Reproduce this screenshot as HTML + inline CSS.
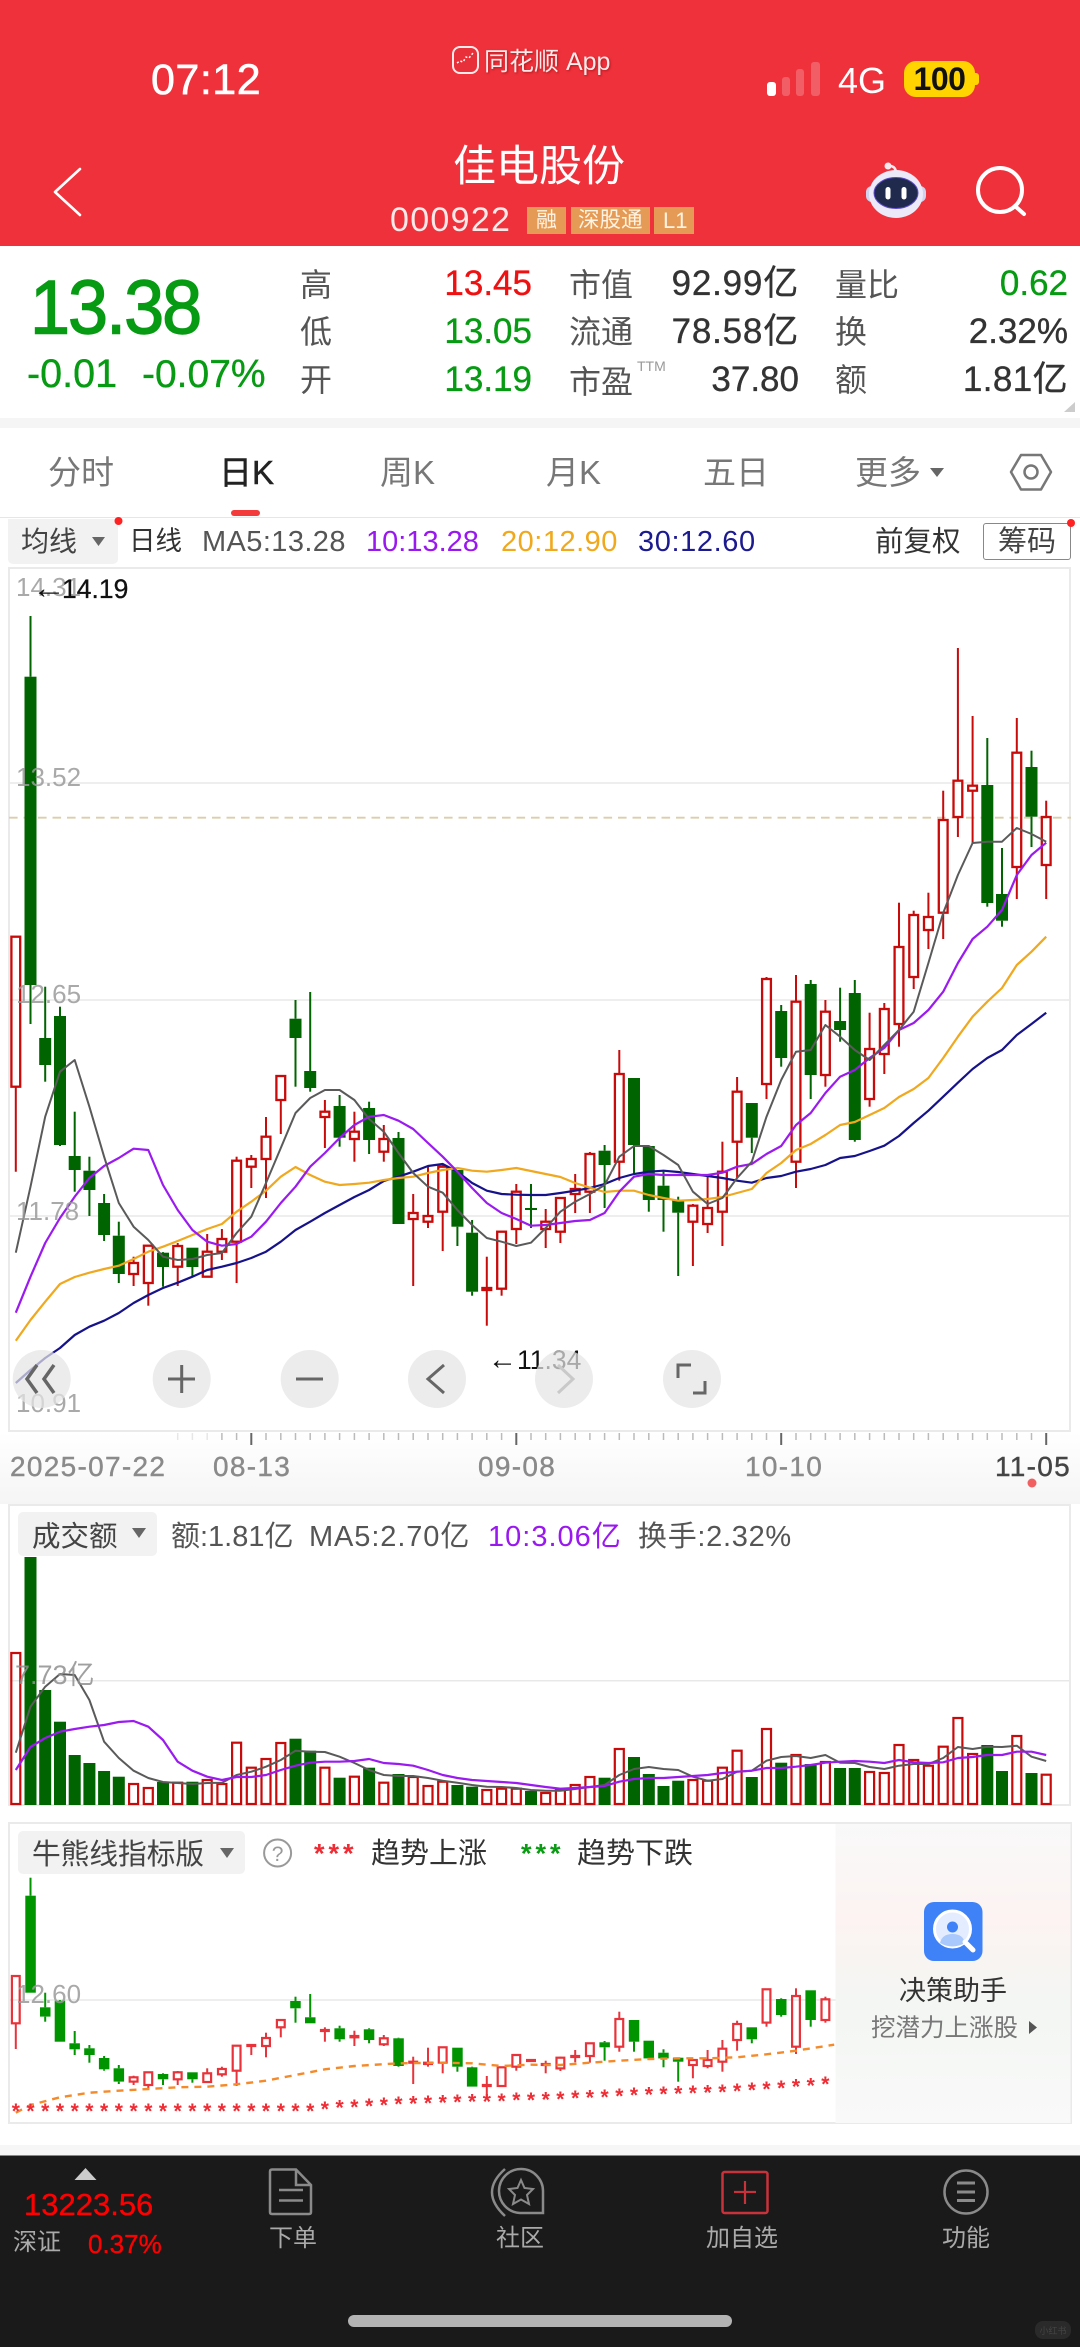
<!DOCTYPE html>
<html lang="zh"><head><meta charset="utf-8"><title>佳电股份</title>
<style>
html,body{margin:0;padding:0;background:#fff}
#p{position:relative;width:1080px;height:2347px;overflow:hidden;background:#fff;font-family:"Liberation Sans","Noto Sans CJK SC",sans-serif}
.t{position:absolute;white-space:nowrap;line-height:1}
.v{-webkit-text-stroke:.35px currentColor}
.b{position:absolute}
svg{position:absolute;left:0;top:0}
svg text{font-family:"Liberation Sans","Noto Sans CJK SC",sans-serif}
</style></head><body><div id="p">
<div class="b" style="left:0;top:0;width:1080px;height:246px;background:#ef313b"></div>
<div class="b" style="left:0;top:418px;width:1080px;height:10px;background:#f5f5f5"></div>
<div class="b" style="left:0;top:517px;width:1080px;height:1px;background:#e6e6e6"></div>
<div class="b" style="left:0;top:1432px;width:1080px;height:72px;background:linear-gradient(#fff,#f5f5f5)"></div>
<div class="b" style="left:0;top:2145px;width:1080px;height:10px;background:#f6f6f6"></div>
<div class="b" style="left:0;top:2155px;width:1080px;height:192px;background:#1a1a1a;border-top:1px solid #888;box-sizing:border-box"></div>

<span class="t" style="left:151px;top:59px;font-size:43px;color:#fff;-webkit-text-stroke:.6px #fff;letter-spacing:.5px">07:12</span>
<span class="t" style="left:484px;top:50px;font-size:25px;color:#fdeaea;text-shadow:1px 1px 2px rgba(120,0,0,.5)">同花顺 App</span>
<span class="t" style="left:838px;top:63px;font-size:36px;color:#fff">4G</span>
<div class="b" style="left:904px;top:61px;width:71px;height:36px;border-radius:12px;background:#ffd400"></div>
<div class="b" style="left:975px;top:73px;width:4px;height:12px;border-radius:0 3px 3px 0;background:#ffd400"></div>
<span class="t" style="left:904px;width:71px;text-align:center;top:63px;font-size:32px;font-weight:bold;color:#111;letter-spacing:-.5px">100</span>

<span class="t" style="left:453px;top:146px;font-size:43px;color:#fff">佳电股份</span>
<span class="t" style="left:390px;top:203px;font-size:34px;color:#fbe9e9;letter-spacing:1.3px">000922</span>
<div class="b" style="left:527px;top:207px;width:39px;height:27px;background:#e59a55"></div>
<div class="b" style="left:571px;top:207px;width:79px;height:27px;background:#e59a55"></div>
<div class="b" style="left:654px;top:207px;width:40px;height:27px;background:#e59a55"></div>
<span class="t" style="left:536px;top:210px;font-size:21px;color:#fff4e4">融</span>
<span class="t" style="left:578px;top:210px;font-size:21.5px;color:#fff4e4">深股通</span>
<span class="t" style="left:663px;top:210px;font-size:22px;color:#fff4e4">L1</span>

<span class="t" style="left:30px;top:272px;font-size:72px;color:#079a13;letter-spacing:-2px;-webkit-text-stroke:1.3px #079a13;transform-origin:0 50%;transform:scaleY(1.06)">13.38</span>
<span class="t v" style="left:27px;top:355px;font-size:39.5px;color:#079a13">-0.01</span>
<span class="t v" style="left:142px;top:355px;font-size:39px;color:#079a13">-0.07%</span>

<span class="t" style="left:300px;top:269px;font-size:32px;color:#555">高</span>
<span class="t" style="left:300px;top:316px;font-size:32px;color:#555">低</span>
<span class="t" style="left:300px;top:364px;font-size:32px;color:#555">开</span>
<span class="t v" style="right:548px;top:266px;font-size:35px;color:#ee1111">13.45</span>
<span class="t v" style="right:548px;top:314px;font-size:35px;color:#079a13">13.05</span>
<span class="t v" style="right:548px;top:362px;font-size:35px;color:#079a13">13.19</span>
<span class="t" style="left:569px;top:269px;font-size:32px;color:#555">市值</span>
<span class="t" style="left:569px;top:316px;font-size:32px;color:#555">流通</span>
<span class="t" style="left:569px;top:366px;font-size:32px;color:#555">市盈</span>
<span class="t" style="left:637px;top:359px;font-size:14px;color:#999">TTM</span>
<span class="t v" style="right:281px;top:266px;font-size:35px;color:#333;letter-spacing:.8px">92.99亿</span>
<span class="t v" style="right:281px;top:314px;font-size:35px;color:#333;letter-spacing:.8px">78.58亿</span>
<span class="t v" style="right:281px;top:362px;font-size:35px;color:#333">37.80</span>
<span class="t" style="left:835px;top:269px;font-size:32px;color:#555">量比</span>
<span class="t" style="left:835px;top:316px;font-size:32px;color:#555">换</span>
<span class="t" style="left:835px;top:364px;font-size:32px;color:#555">额</span>
<span class="t v" style="right:12px;top:266px;font-size:35px;color:#079a13">0.62</span>
<span class="t v" style="right:12px;top:314px;font-size:35px;color:#333">2.32%</span>
<span class="t v" style="right:12px;top:362px;font-size:35px;color:#333;letter-spacing:.4px">1.81亿</span>

<span class="t" style="left:48px;top:456px;font-size:33px;color:#777">分时</span>
<span class="t" style="left:219px;top:456px;font-size:33px;color:#222;-webkit-text-stroke:.5px #222">日K</span>
<span class="t" style="left:380px;top:456px;font-size:33px;color:#777">周K</span>
<span class="t" style="left:546px;top:456px;font-size:33px;color:#777">月K</span>
<span class="t" style="left:703px;top:456px;font-size:33px;color:#777">五日</span>
<span class="t" style="left:855px;top:456px;font-size:33px;color:#777">更多</span>
<div class="b" style="left:231px;top:510px;width:29px;height:6px;border-radius:3px;background:#f33b3b"></div>

<div class="b" style="left:8px;top:519px;width:110px;height:45px;background:#f2f2f2;border-radius:0 0 5px 5px"></div>
<span class="t" style="left:21px;top:528px;font-size:28px;color:#444">均线</span>
<span class="t" style="left:129px;top:528px;font-size:26.5px;color:#333">日线</span>
<span class="t" style="left:202px;top:528px;font-size:29px;color:#555;letter-spacing:.4px">MA5:13.28</span>
<span class="t" style="left:366px;top:528px;font-size:29px;color:#9a18f0">10:13.28</span>
<span class="t" style="left:501px;top:528px;font-size:29px;color:#f0a81c;letter-spacing:.5px">20:12.90</span>
<span class="t" style="left:638px;top:528px;font-size:29px;color:#1c1a8f;letter-spacing:.6px">30:12.60</span>
<span class="t" style="left:875px;top:528px;font-size:28.5px;color:#333">前复权</span>
<div class="b" style="left:983px;top:523px;width:88px;height:37px;border:1.5px solid #888;box-sizing:border-box;border-radius:3px"></div>
<span class="t" style="left:998px;top:528px;font-size:29px;color:#444">筹码</span>

<div class="b" style="left:8px;top:567px;width:1063px;height:865px;border:2px solid #eaeaea;box-sizing:border-box"></div>
<div class="b" style="left:8px;top:1504px;width:1063px;height:302px;border:2px solid #eaeaea;box-sizing:border-box"></div>
<div class="b" style="left:8px;top:1822px;width:1064px;height:302px;border:2.5px solid #eaeaea;box-sizing:border-box"></div>

<svg id="s" width="1080" height="2347" viewBox="0 0 1080 2347" xmlns="http://www.w3.org/2000/svg">
<!-- status & header icons -->
<rect x="767" y="82" width="9" height="14" rx="3" fill="#fff"/>
<rect x="782" y="77" width="8" height="19" rx="3" fill="#fff" opacity=".22"/>
<rect x="796" y="69" width="8" height="27" rx="3" fill="#fff" opacity=".22"/>
<rect x="811" y="62" width="9" height="34" rx="3" fill="#fff" opacity=".22"/>
<rect x="453" y="47" width="25" height="26" rx="7" fill="#e8303a" stroke="#fdeaea" stroke-width="2"/>
<path d="M457 63l3 -2 3 1 3 -5 3 1 4 -5" fill="none" stroke="#fff" stroke-width="1.5" stroke-dasharray="2 2"/>
<path d="M80 169L55 192L80 215" fill="none" stroke="#fff" stroke-width="2.600" stroke-linecap="round" stroke-linejoin="round"/>
<path d="M888 166Q895 165 896 172" fill="none" stroke="#f3e9ee" stroke-width="2.5"/><circle cx="888" cy="166" r="3.5" fill="#f3e9ee"/>
<rect x="866" y="186" width="60" height="16" rx="6" fill="#cfd3ee"/>
<ellipse cx="896" cy="194" rx="27" ry="24" fill="#eceaf8"/>
<ellipse cx="896" cy="193" rx="22" ry="15.5" fill="#1f2a4d" stroke="#5c4bc7" stroke-width="1"/>
<rect x="885.5" y="187" width="5" height="12.5" rx="2.5" fill="#fff"/><rect x="901.5" y="187" width="5" height="12.5" rx="2.5" fill="#fff"/>
<circle cx="1000" cy="190" r="22" fill="none" stroke="#fff" stroke-width="4"/>
<path d="M1015 206L1024 214" stroke="#fff" stroke-width="4" stroke-linecap="round"/>
<path d="M1075 402V412H1064Z" fill="#ccc"/>
<path d="M930 468H944L937 477Z" fill="#666"/>
<path d="M1011 472L1021 455H1041L1051 472L1041 489.500H1021Z" fill="none" stroke="#777" stroke-width="2.5" stroke-linejoin="round"/><circle cx="1031" cy="472" r="6.5" fill="none" stroke="#777" stroke-width="2.5"/>
<circle cx="118.5" cy="521" r="4" fill="#f22"/><circle cx="1071" cy="523" r="4" fill="#f22"/>
<path d="M92 537H105L98.500 546Z" fill="#666"/>

<!-- main chart -->
<path d="M10 783H1069M10 1000H1069M10 1216H1069" stroke="#e8e8e8" stroke-width="1.500"/>
<path d="M9 817.700H1071" stroke="#dccdae" stroke-width="1.800" stroke-dasharray="8.600 5.900"/>
<g id="kc"></g><g id="ml"></g>
<g font-size="26" fill="#9a9a9a" fill-opacity=".85">
<text x="16" y="596">14.31</text><text x="16" y="786">13.52</text><text x="16" y="1003">12.65</text><text x="16" y="1220">11.78</text><text x="16" y="1412">10.91</text>
</g>
<text x="32" y="598" font-size="30" fill="#111" textLength="34" lengthAdjust="spacingAndGlyphs">←</text><text x="62" y="598" font-size="26.500" fill="#111" stroke="#111" stroke-width=".3">14.19</text>
<text x="488" y="1369" font-size="30" fill="#111" textLength="29" lengthAdjust="spacingAndGlyphs">←</text><text x="517" y="1369" font-size="26.500" fill="#111">11.34</text>
<g fill="#e5e5e5" fill-opacity=".72">
<circle cx="41.700" cy="1379" r="29"/><circle cx="181.700" cy="1379" r="29"/><circle cx="309.700" cy="1379" r="29"/><circle cx="437" cy="1379" r="29"/><circle cx="564" cy="1379" r="29"/><circle cx="692" cy="1379" r="29"/>
</g>
<g fill="none" stroke="#666" stroke-width="3">
<path d="M37 1365L27 1379L37 1393M54 1365L44 1379L54 1393" stroke-width="3.500"/>
<path d="M168 1379H195M181.700 1365V1393"/><path d="M296 1379H323"/><path d="M444 1365L428 1379L444 1393"/>
<path d="M558 1365L573 1379L558 1393" stroke="#c9c9c9"/>
<path d="M678 1378V1365H691M705 1381V1393H693"/>
</g>
<g id="tk"></g>
<g font-size="28" fill="#8a8a8a" stroke="#8a8a8a" stroke-width=".4" letter-spacing="1.300">
<text x="10" y="1476">2025-07-22</text><text x="213" y="1476">08-13</text><text x="478" y="1476">09-08</text><text x="745" y="1476">10-10</text><text x="995" y="1476" fill="#444" stroke="#444">11-05</text>
</g>
<circle cx="1032" cy="1483" r="4.500" fill="#f06060"/>

<!-- volume -->
<path d="M10 1680.700H1069" stroke="#e8e8e8" stroke-width="1.500"/>
<g id="vc"></g><g id="vl"></g>
<text x="15" y="1684" font-size="27" fill="#8f8f8f" fill-opacity=".85">7.73亿</text>
<rect x="18" y="1512" width="139" height="44" rx="5" fill="#f2f2f2"/>
<text x="32" y="1546" font-size="28.500" fill="#444">成交额</text>
<path d="M132 1528H146L139 1538Z" fill="#666"/>
<g font-size="29" fill="#555"><text x="171" y="1546">额:1.81亿</text><text x="309" y="1546" letter-spacing=".9">MA5:2.70亿</text><text x="488" y="1546" fill="#9a18f0" letter-spacing="1">10:3.06亿</text><text x="638" y="1546" letter-spacing=".7">换手:2.32%</text></g>

<!-- trend -->
<path d="M10 2000H1069" stroke="#e8e8e8" stroke-width="1.500"/>
<g id="tc"></g><g id="ts"></g>
<text x="16" y="2003" font-size="26" fill="#9a9a9a" fill-opacity=".85">12.60</text>
<rect x="18" y="1831" width="227" height="43" rx="5" fill="#f2f2f2"/>
<text x="32" y="1864" font-size="28.700" fill="#444">牛熊线指标版</text>
<path d="M220 1848H234L227 1858Z" fill="#666"/>
<circle cx="277.600" cy="1853" r="13.500" fill="none" stroke="#999" stroke-width="2"/>
<text x="277.600" y="1861" font-size="21" fill="#999" text-anchor="middle">?</text>
<text x="314" y="1862.700" font-size="27" font-weight="bold" fill="#ef2b33" letter-spacing="4">***</text>
<text x="521" y="1862.700" font-size="27" font-weight="bold" fill="#0a9a13" letter-spacing="4">***</text>
<text x="371" y="1863" font-size="29" fill="#333">趋势上涨</text>
<text x="577" y="1863" font-size="29" fill="#333">趋势下跌</text>
<defs><linearGradient id="pg" x1="0" y1="0" x2="0" y2="1"><stop offset="0" stop-color="#f9f9f9"/><stop offset=".32" stop-color="#fcf3f2"/><stop offset=".62" stop-color="#f3f6f3"/><stop offset="1" stop-color="#f9f9f9"/></linearGradient></defs>
<rect x="835.500" y="1824" width="235" height="299" fill="url(#pg)"/>
<rect x="924" y="1902" width="58.500" height="59" rx="10" fill="#3f82f8"/>
<circle cx="952.500" cy="1929" r="18" fill="#e3edff" stroke="#fff" stroke-width="3"/>
<circle cx="952.500" cy="1927" r="5.500" fill="#3f82f8"/>
<path d="M940 1943Q942 1934 952.500 1934Q963 1934 965 1943Q952 1950 940 1943Z" fill="#a9c8fb"/>
<path d="M965 1942L973 1950" stroke="#fff" stroke-width="5" stroke-linecap="round"/>
<text x="899" y="2000" font-size="27" fill="#333">决策助手</text>
<text x="871" y="2036" font-size="24.500" fill="#777">挖潜力上涨股</text>
<path d="M1029 2021L1037 2027.500L1029 2034Z" fill="#555"/>

<!-- bottom nav -->
<path d="M74.500 2180L85.500 2168L96.500 2180Z" fill="#ccc"/>
<g fill="none" stroke="#8a8a8a" stroke-width="2.500">
<path d="M272 2169.500H296L311 2185V2212Q311 2214 309 2214H272Q270 2214 270 2212V2171.500Q270 2169.500 272 2169.500ZM296 2170V2185H311"/>
<path d="M279 2190H303M279 2200.500H303"/>
<path d="M543 2213H520A22 22 0 1 1 543 2191Z"/>
<path d="M505 2169Q479 2192 505 2216"/>
<path d="M521 2180L524.500 2188L533 2189L527 2195L529 2204L521 2199.500L513 2204L515 2195L509 2189L517.500 2188Z" stroke-width="2"/>
<circle cx="966" cy="2192" r="21.500"/>
<path d="M957 2183H975M957 2192H975M957 2200.500H975" stroke-width="3"/>
</g>
<rect x="722.500" y="2172" width="45" height="41" rx="2" fill="none" stroke="#c8323a" stroke-width="2.500"/>
<path d="M734 2192H756M745 2181V2204" stroke="#c8323a" stroke-width="2.200"/>
<rect x="348" y="2315" width="384" height="12" rx="6" fill="#b3b3b3"/>
<rect x="1035" y="2321" width="36" height="18" rx="8" fill="#2a2a2a"/>
<text x="1053" y="2334" font-size="9" fill="#444" text-anchor="middle">小红书</text>
</svg>

<span class="t v" style="left:24px;top:2189px;font-size:31px;color:#f00">13223.56</span>
<span class="t" style="left:13px;top:2231px;font-size:24px;color:#aaa">深证</span>
<span class="t v" style="left:88px;top:2231px;font-size:26px;color:#f00">0.37%</span>
<span class="t" style="left:269px;top:2227px;font-size:24px;color:#aaa">下单</span>
<span class="t" style="left:496px;top:2227px;font-size:24px;color:#aaa">社区</span>
<span class="t" style="left:706px;top:2227px;font-size:24px;color:#aaa">加自选</span>
<span class="t" style="left:942px;top:2227px;font-size:24px;color:#aaa">功能</span>

<script>
var X=function(i){return 15.8+14.72*i};
var K=[[936.7,936.7,1086.7,1171.7,1],[616,676.7,985,1024,0],[986.7,1038,1065,1081.7,0],[1006.7,1016,1145,1146,0],[1111.7,1156,1170,1191.7,0],[1156.7,1170.7,1190,1216,0],[1194,1203,1235,1241,0],[1221.7,1235.7,1274,1283,0],[1256.7,1263,1274,1286,1],[1245,1245.7,1283,1305.7,1],[1252,1252.7,1267,1286.7,0],[1243,1246,1266.7,1286,1],[1247.7,1247.7,1267,1276.7,0],[1234,1251.7,1276.7,1276.7,1],[1229,1239,1251.7,1260,1],[1156.7,1160.7,1241.7,1283,1],[1155,1159,1166.7,1188,1],[1117,1136.7,1159,1198,1],[1075,1076,1100,1134,1],[1000,1018.7,1038,1086.7,0],[992,1071,1088,1091.7,0],[1100,1111.7,1117,1148,1],[1095,1106,1137.7,1146.7,0],[1111.7,1131.7,1139,1161.7,1],[1101.7,1108,1140,1154,0],[1125,1139,1151.7,1161.7,1],[1132,1138,1224,1224,0],[1194,1213,1219,1286,1],[1166.7,1216,1221.7,1228,1],[1165,1166.7,1211.7,1251,1],[1170,1170,1226.7,1246,0],[1220,1232.7,1291.7,1295.7,0],[1256.7,1288,1290,1325.7,1],[1231,1231.7,1288.7,1295.7,1],[1184,1191.7,1229,1244,1],[1184,1208,1210,1228,0],[1209,1221.7,1229,1248,1],[1197,1198,1231.7,1243,1],[1174,1189,1194,1213,1],[1152,1154,1191.7,1213,1],[1145,1150.7,1165,1208,0],[1050,1074,1161.7,1180.7,1],[1078,1078,1145,1175,0],[1146,1146,1200,1211.7,0],[1171.7,1185.7,1200,1231.7,0],[1196.7,1200,1212.7,1276,0],[1204,1205.7,1221.7,1266,1],[1175,1208,1224,1233,1],[1141.7,1171.7,1211.7,1246,1],[1077,1091.7,1141.7,1178,1],[1103,1103,1137.7,1153,0],[977,979,1084,1099,1],[1005,1011,1058,1066.7,0],[975,1001.7,1161.7,1188,1],[980,984,1075,1099,0],[1000,1011.7,1075,1086.7,1],[987.7,1021,1030,1041.7,0],[980,993,1140,1141.7,0],[1012.7,1049,1099,1106.7,1],[1003,1009,1054,1074,1],[902.7,947,1024,1046.7,1],[910.7,915,977,989,1],[892.7,917,930,949,1],[790.7,820,912.7,939,1],[648,780.7,817,837,1],[716,785.7,790.7,843,1],[738,785,903,906.7,0],[848,894,920.7,926.7,0],[718,752.7,867,899,1],[750.7,767,816.7,847,0],[800.7,817,865,899,1]];
var M5=[1252.7,1186.7,1116.7,1071.7,1060,1106.7,1156.7,1203,1226.7,1240,1256.7,1260,1259,1255,1253,1233,1216.7,1183,1148,1113,1098,1090,1090,1100,1119,1131.7,1153,1173,1186.7,1192.7,1210,1225,1238,1241.7,1246,1242.7,1228,1211.7,1201.7,1194,1185,1156.7,1146,1146,1155,1165,1191.7,1204,1198,1178,1161.7,1116.7,1080,1051.7,1050,1025,1036.7,1050,1060,1045,1030,1011.7,963,913,875,843,841.7,841.7,828,834,841.7];
var M10=[1312.7,1276.7,1243,1218,1196.7,1178,1166,1158,1148.7,1150,1185,1210,1230,1241.7,1245.7,1244,1236.7,1221.7,1203,1186.7,1166.7,1153,1138,1125,1116.7,1115,1120.7,1129,1143,1156.7,1171.7,1188,1203,1213,1219,1225.7,1225,1223,1221,1220,1213,1191.7,1176.7,1174,1175,1175,1175,1175,1172.7,1166.7,1164,1154,1146,1125,1113,1093,1076.7,1070,1058,1048,1030,1023,1010,991.7,963,939,926.7,910,875,855,842.7];
var M20=[1340.7,1320,1301.7,1284,1277,1272.7,1269,1265.7,1259,1251.7,1246.7,1241,1235,1229,1224,1211.7,1201.7,1190.7,1176.7,1167,1175,1181.7,1185,1184,1182.7,1180,1178,1176.7,1173,1170,1168,1170.7,1171.7,1170,1168,1171,1174,1177,1183,1187.7,1192,1190.7,1190.7,1195,1198,1200.7,1200,1199,1197,1193,1189,1173,1163,1150,1144,1135,1125,1122,1115,1108,1097,1089,1078,1058,1036.7,1016.7,1001.7,988,965,951.7,936.7];
var M30=[1383,1370,1358,1348,1335,1326.7,1320.7,1313,1303,1295,1288,1282.7,1276.7,1270,1266.7,1263,1258,1251.7,1241.7,1230,1221.7,1213,1205,1197,1190,1181,1176.7,1171.7,1166,1164,1171.7,1183,1190.7,1194,1194.7,1195,1195,1193,1190.7,1188,1184,1178,1174,1171.7,1170.7,1172,1174,1176,1178,1180.7,1182.7,1178,1176,1171.7,1169,1165,1158,1156,1151,1145.7,1136,1123,1110.7,1096.7,1082.7,1069,1058,1050,1035,1024,1012.7];
var V=[1653,1557,1690,1721.7,1755,1763,1771,1776.7,1784,1788,1782,1782.7,1781.7,1780,1784,1742.7,1767.7,1759,1743,1738.7,1750.7,1767.7,1777.7,1776.7,1767.7,1782.7,1774,1777,1786,1781.7,1785,1786.7,1790,1788.7,1788.7,1791,1793,1790,1785,1777,1777.7,1749,1757,1774,1786,1780.7,1780,1780.7,1767.7,1750.7,1777,1729,1762.7,1755,1764,1762,1768,1768,1772,1773,1745,1760,1765.7,1746.7,1718,1754,1745,1771,1736,1773,1774.7];
var VM5=[1752.7,1706.7,1686.7,1674,1675,1700,1741.7,1758,1770.7,1778,1782,1783,1784,1783,1782.7,1775,1771.7,1766.7,1760,1750.7,1751.7,1752,1756.7,1763,1770,1775,1776,1776,1778,1780.7,1782.7,1785,1786.7,1787,1788,1790,1790.7,1790.7,1789,1787,1785,1775,1769,1767,1769,1770,1776.7,1780.7,1779,1771.7,1770.7,1760.7,1757,1756,1758,1755,1762.7,1763,1767,1769,1765.7,1764,1764,1758,1747,1749,1746.7,1747,1745.7,1756.7,1761];
var VM10=[1770,1747,1738,1731.7,1729,1726.7,1725,1722,1721,1726.7,1740,1761.7,1770.7,1776.7,1780,1777,1777,1775,1770,1765.7,1762.7,1761.7,1761.7,1761,1759,1763,1764,1765.7,1770,1775,1778,1780,1781,1782,1783,1785,1787,1788.7,1788,1787,1786,1781.7,1779,1778,1778,1777,1776,1775,1773,1771.7,1770.7,1768,1768,1766.7,1765,1762.7,1761.7,1761,1761.7,1763,1760,1762.3,1763,1762.3,1758,1757,1755,1755,1751.7,1751.7,1755];
var T=[[498,498,640,717,1],[203,257,548,548,0],[548,592,620,635,0],[570,572,695,695,0],[663,700,718,735,0],[705,715,735,758,0],[738,744,778,782,0],[765,775,815,822,0],[797,802,815,825,1],[785,787,825,840,1],[790,792,808,825,0],[783,787,808,825,1],[787,787,808,818,0],[775,790,816,816,1],[770,777,793,800,1],[705,707,782,828,1],[703,705,708,735,1],[668,684,708,742,1],[628,630,652,682,1],[560,573,595,638,0],[552,622,640,640,0],[652,660,663,695,1],[647,655,688,695,0],[662,678,682,708,1],[655,658,690,700,0],[675,685,703,708,1],[683,685,768,770,0],[740,755,758,822,1],[713,758,762,770,1],[710,712,758,790,1],[713,713,770,785,0],[770,772,830,830,0],[798,825,828,865,1],[770,772,828,830,1],[733,735,770,782,1],[750,750,752,752,1],[752,762,765,790,1],[740,743,775,783,1],[720,738,740,757,1],[698,700,738,758,1],[693,697,712,752,0],[605,627,710,725,1],[630,630,695,725,0],[692,692,745,750,0],[718,728,745,772,0],[742,743,755,815,0],[748,750,765,805,1],[720,750,768,775,1],[690,716,755,785,1],[632,642,690,722,1],[652,652,688,700,0],[538,538,638,650,1],[565,567,615,620,0],[535,558,710,732,1],[541,541,630,650,0],[560,568,630,638,1]];
var S=[898,898,898,898,898,898,898,898,898,898,898,898,898,898,898,898,898,898,898,898,898,892,888,886,883,880,878,876,875,873,872,870,870,868,866,865,864,862,860,858,856,853,851,849,847,846,845,843,842,838,836,833,829,825,822,818];
var D=[[0,908],[1,885],[3,862],[5,848],[7,842],[9,837],[11,832],[13,830],[15,823],[17,812],[19,795],[21,778],[23,768],[26,760],[29,758],[31,760],[33,768],[35,764],[37,765],[39,758],[41,752],[43,747],[45,745],[47,745],[49,742],[51,733],[53,722],[55.6,704]];
function f(n){return n.toFixed(1)}
function candles(A,conv,rw,gw,rc,gc,sw){var o='';A.forEach(function(c,i){var x=X(i),h=conv(c[0]),t=conv(c[1]),b=conv(c[2]),l=conv(c[3]),col=c[4]?rc:gc;
 if(t-h>.5)o+='<path d="M'+f(x)+' '+f(h)+'V'+f(t)+'" stroke="'+col+'" stroke-width="2"/>';
 if(l-b>.5)o+='<path d="M'+f(x)+' '+f(b)+'V'+f(l)+'" stroke="'+col+'" stroke-width="2"/>';
 if(c[4]){o+='<rect x="'+f(x-rw/2)+'" y="'+f(t)+'" width="'+rw+'" height="'+f(Math.max(b-t,1))+'" fill="none" stroke="'+col+'" stroke-width="'+sw+'"/>'}
 else{o+='<rect x="'+f(x-gw/2)+'" y="'+f(t)+'" width="'+gw+'" height="'+f(Math.max(b-t,2))+'" fill="'+col+'"/>'}});return o}
function line(A,col,w){return '<polyline fill="none" stroke="'+col+'" stroke-width="'+(w||2)+'" stroke-linejoin="round" points="'+A.map(function(y,i){return f(X(i))+','+f(y)}).join(' ')+'"/>'}
var id=function(v){return v},tc=function(v){return 1810+v/3};
document.getElementById('kc').innerHTML=candles(K,id,8.8,12,'#c80a0a','#006400',2.3);
document.getElementById('ml').innerHTML=line(M30,'#16128a',2.2)+line(M20,'#f0a81e',2.2)+line(M10,'#9a1af0',2.2)+line(M5,'#5a5a5a',2);
var tk='';for(var i=11;i<=70;i++){var maj=(i==16||i==34||i==52||i==70);var op=i<14?.35:1;tk+='<path d="M'+f(X(i))+' 1433V'+(maj?1445:1440)+'" stroke="'+(maj?'#666':'#bbb')+'" stroke-width="'+(maj?2:1.5)+'" opacity="'+op+'"/>'}
document.getElementById('tk').innerHTML=tk;
var vb='';V.forEach(function(t,i){var r=K[i][4],x=X(i);vb+=r?'<rect x="'+f(x-4.5)+'" y="'+f(t)+'" width="9" height="'+f(1804-t)+'" fill="none" stroke="#c80a0a" stroke-width="2.2"/>':'<rect x="'+f(x-6)+'" y="'+f(t)+'" width="12" height="'+f(1805-t)+'" fill="#006400"/>'});
document.getElementById('vc').innerHTML=vb;
document.getElementById('vl').innerHTML=line(VM5,'#5a5a5a',2)+line(VM10,'#9a1af0',2.2);
document.getElementById('tc').innerHTML=candles(T,tc,7.8,10.5,'#e8333a','#009400',2.2);
var so='<polyline fill="none" stroke="#f58a2a" stroke-width="2.4" stroke-dasharray="7 6" points="'+D.map(function(p){return f(X(p[0]))+','+f(tc(p[1]))}).join(' ')+'"/>';
S.forEach(function(v,i){so+='<text x="'+f(X(i))+'" y="'+f(tc(v)+8.5)+'" font-size="21" font-weight="bold" fill="#ef2b33" text-anchor="middle">*</text>'});
document.getElementById('ts').innerHTML=so;
</script>
</div></body></html>
